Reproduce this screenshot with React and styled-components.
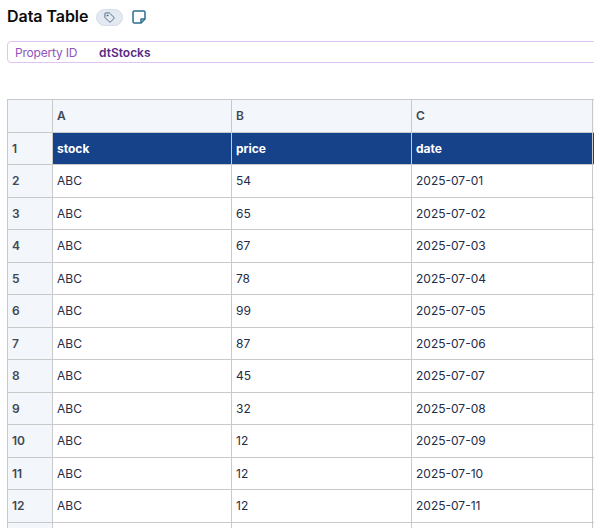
import React from "react";
import styled, { createGlobalStyle } from "styled-components";

const GlobalStyle = createGlobalStyle`
  html, body {
    margin: 0;
    padding: 0;
    background: #fff;
    overflow: hidden;
    height: 528px;
  }
  body {
    font-family: Inter, "Liberation Sans", sans-serif;
  }
`;

const Page = styled.div`
  width: 594px;
  height: 528px;
  overflow: hidden;
  padding: 6px 0 0 7px;
  box-sizing: border-box;
`;

const Header = styled.div`
  display: flex;
  align-items: center;
  height: 21px;
`;

const Title = styled.h1`
  margin: 0;
  font-size: 16px;
  line-height: 21px;
  font-weight: 600;
  letter-spacing: -0.05px;
  color: #0c0c0c;
`;

const TagPill = styled.span`
  display: flex;
  align-items: center;
  justify-content: center;
  width: 27px;
  height: 17px;
  margin-left: 8px;
  margin-top: 1px;
  border-radius: 9px;
  background: #e3e9f1;
  border: 1px solid #d5dde8;
  box-sizing: border-box;
  color: #44617f;
`;

const NoteButton = styled.span`
  display: flex;
  margin-left: 9px;
  margin-top: 1px;
  color: #2c6e8f;
`;

const PropertyBar = styled.div`
  display: flex;
  align-items: center;
  height: 22px;
  margin-top: 14px;
  margin-right: -8px;
  padding-left: 7px;
  border: 1px solid #e2c4f2;
  border-radius: 4px;
  font-size: 12px;
  box-sizing: border-box;
`;

const PropertyLabel = styled.span`
  width: 84px;
  color: #8f55bd;
  letter-spacing: -0.2px;
`;

const PropertyValue = styled.span`
  font-weight: 600;
  color: #5a2a85;
`;

const Sheet = styled.div`
  display: grid;
  grid-template-columns: 45px 179px 180px 181px 40px;
  grid-auto-rows: 32.5px;
  width: 625px;
  margin-top: 36px;
  border-top: 1px solid #c9c9c9;
  border-left: 1px solid #c9c9c9;
`;

const Cell = styled.div`
  display: flex;
  align-items: center;
  padding-left: 4px;
  box-sizing: border-box;
  border-right: 1px solid #c9c9c9;
  border-bottom: 1px solid #c9c9c9;
  font-size: 12px;
  color: #232c48;
  background: #fff;
`;

const ColHead = styled(Cell)`
  background: #f3f6fa;
  font-weight: 600;
  color: #3f4854;
`;

const RowHead = styled(Cell)`
  background: #f3f6fa;
  font-weight: 600;
  color: #3f4854;
`;

const HeaderCell = styled(Cell)`
  background: #16428a;
  font-weight: 700;
  color: #fff;
`;

const dataRows = [
  ["ABC", 54, "2025-07-01"],
  ["ABC", 65, "2025-07-02"],
  ["ABC", 67, "2025-07-03"],
  ["ABC", 78, "2025-07-04"],
  ["ABC", 99, "2025-07-05"],
  ["ABC", 87, "2025-07-06"],
  ["ABC", 45, "2025-07-07"],
  ["ABC", 32, "2025-07-08"],
  ["ABC", 12, "2025-07-09"],
  ["ABC", 12, "2025-07-10"],
  ["ABC", 12, "2025-07-11"],
  ["", "", ""],
];

const TagIcon = () => (
  <svg width="11" height="11" viewBox="0 0 24 24" fill="none" stroke="currentColor" strokeWidth="2" strokeLinecap="round" strokeLinejoin="round">
    <path d="M12.6 2.6A2 2 0 0 0 11.2 2H4a2 2 0 0 0-2 2v7.2a2 2 0 0 0 .6 1.4l8.7 8.7a2.4 2.4 0 0 0 3.4 0l6.6-6.6a2.4 2.4 0 0 0 0-3.4z" />
    <circle cx="7.5" cy="7.5" r="1" fill="currentColor" />
  </svg>
);

const NoteIcon = () => (
  <svg width="14" height="14" viewBox="0 0 14 14" fill="none" stroke="currentColor" strokeWidth="1.5" strokeLinejoin="round">
    <path d="M2.5 1h9A1.5 1.5 0 0 1 13 2.500V9l-4 4H2.500A1.500 1.500 0 0 1 1 11.500v-9A1.500 1.500 0 0 1 2.500 1z" />
    <path d="M13 9H9v4" />
  </svg>
);

export default function App() {
  return (
    <Page>
      <GlobalStyle />
      <Header>
        <Title>Data Table</Title>
        <TagPill>
          <TagIcon />
        </TagPill>
        <NoteButton>
          <NoteIcon />
        </NoteButton>
      </Header>
      <PropertyBar>
        <PropertyLabel>Property ID</PropertyLabel>
        <PropertyValue>dtStocks</PropertyValue>
      </PropertyBar>
      <Sheet>
        <ColHead />
        <ColHead>A</ColHead>
        <ColHead>B</ColHead>
        <ColHead>C</ColHead>
        <ColHead />
        <RowHead>1</RowHead>
        <HeaderCell>stock</HeaderCell>
        <HeaderCell>price</HeaderCell>
        <HeaderCell>date</HeaderCell>
        <HeaderCell />
        {dataRows.map((row, i) => (
          <React.Fragment key={i}>
            <RowHead>{i < 11 ? i + 2 : ""}</RowHead>
            {row.map((val, j) => (
              <Cell key={j}>{val}</Cell>
            ))}
            <Cell />
          </React.Fragment>
        ))}
      </Sheet>
    </Page>
  );
}
